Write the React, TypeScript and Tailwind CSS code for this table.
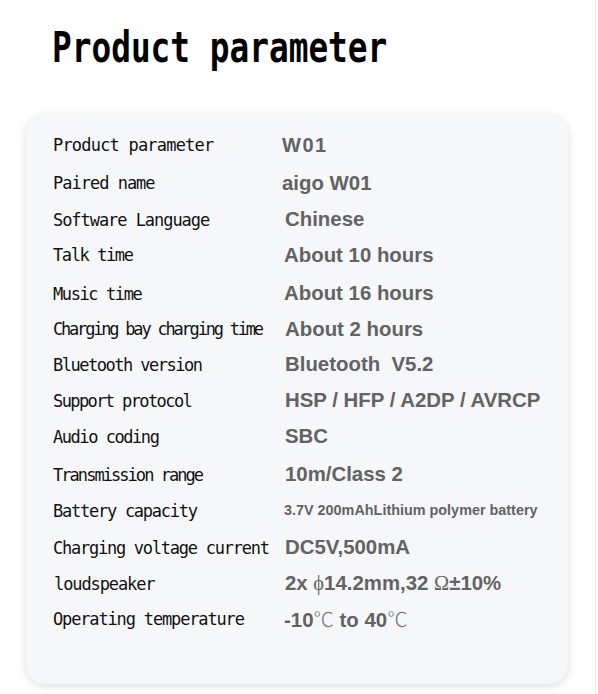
import React from "react";

type Row = {
  label: string;
  labelCls: string;
  rowCls: string;
  value: React.ReactNode;
  valueCls: string;
};

const serif = "font-['Liberation_Serif',serif] font-normal";
const cjk = "font-['Noto_Sans_CJK_SC',sans-serif] font-light text-[#7a7a7a]";

const rows: Row[] = [
  { label: "Product parameter", labelCls: "tracking-[-0.8px]", rowCls: "mt-0", value: "W01", valueCls: "text-[20px] ml-[-2px] tracking-[1.5px]" },
  { label: "Paired name", labelCls: "tracking-[-1px]", rowCls: "mt-[2px]", value: "aigo W01", valueCls: "text-[20.4px] ml-[-2px]" },
  { label: "Software Language", labelCls: "tracking-[-1.05px]", rowCls: "mt-[0.5px]", value: "Chinese", valueCls: "text-[20.4px] ml-[1px]" },
  { label: "Talk time", labelCls: "tracking-[-1.4px]", rowCls: "mt-[-0.5px]", value: "About 10 hours", valueCls: "text-[20.4px] ml-[0px]" },
  { label: "Music time", labelCls: "tracking-[-1.4px]", rowCls: "mt-[2.5px]", value: "About 16 hours", valueCls: "text-[20.4px] ml-[0px]" },
  { label: "Charging bay charging time", labelCls: "tracking-[-2.2px]", rowCls: "mt-[-0.5px]", value: "About 2 hours", valueCls: "text-[20.4px] ml-[1px]" },
  { label: "Bluetooth version", labelCls: "tracking-[-1.5px]", rowCls: "mt-[-0.5px]", value: "Bluetooth\u00a0\u00a0V5.2", valueCls: "text-[20.4px] ml-[1px]" },
  { label: "Support protocol", labelCls: "tracking-[-1.6px]", rowCls: "mt-0", value: "HSP / HFP / A2DP / AVRCP", valueCls: "text-[20.4px] ml-[1px]" },
  { label: "Audio coding", labelCls: "tracking-[-1.45px]", rowCls: "mt-0", value: "SBC", valueCls: "text-[20.4px] ml-[1px]" },
  { label: "Transmission range", labelCls: "tracking-[-1.95px]", rowCls: "mt-[2px]", value: "10m/Class 2", valueCls: "text-[20.4px] ml-[1px]" },
  { label: "Battery capacity", labelCls: "tracking-[-1.25px]", rowCls: "mt-[0.5px]", value: "3.7V 200mAhLithium polymer battery", valueCls: "text-[14.4px] ml-[0px]" },
  { label: "Charging voltage current", labelCls: "tracking-[-1.25px]", rowCls: "mt-[0.5px]", value: "DC5V,500mA", valueCls: "text-[20.4px] ml-[1px]" },
  {
    label: "loudspeaker",
    labelCls: "tracking-[-1.1px] ml-[1px]",
    rowCls: "mt-0",
    value: (
      <>
        2x <span className={serif}>{"\u03d5"}</span>14.2mm,32 <span className={serif}>{"\u03a9"}</span>±10%
      </>
    ),
    valueCls: "text-[20.4px] ml-[0px]",
  },
  {
    label: "Operating temperature",
    labelCls: "tracking-[-1.15px]",
    rowCls: "mt-[-0.5px]",
    value: (
      <>
        -10<span className={cjk}>℃</span> to 40<span className={cjk}>℃</span>
      </>
    ),
    valueCls: "text-[20.4px] ml-[0px]",
  },
];

export default function App() {
  return (
    <div className="relative w-[598px] h-[694px] bg-white overflow-hidden">
      <div className="absolute top-0 left-[595px] w-px h-full bg-[#e9e9e9]" />
      <div className="flex flex-col">
        <div className="pl-[52px] pt-[21px] h-[115px]">
          <h1 className="inline-block origin-left scale-x-[0.78] font-['DejaVu_Sans_Mono',monospace] font-bold text-[42px] leading-[54px] text-black whitespace-nowrap">
            Product parameter
          </h1>
        </div>
        <div className="ml-[26px] w-[542px] h-[569px] rounded-[20px] bg-[#f6f7f9] shadow-[0_2px_10px_rgba(0,0,0,0.14)] pt-[12px] pl-[27px] flex flex-col">
          {rows.map((r, i) => (
            <div key={i} className={`flex items-center h-9 ${r.rowCls}`}>
              <div
                className={`w-[231px] shrink-0 pt-[2px] font-['DejaVu_Sans_Mono',monospace] text-[17px] text-[#111] whitespace-nowrap ${r.labelCls}`}
              >
                {r.label}
              </div>
              <div
                className={`font-['Liberation_Sans',Arial,sans-serif] font-bold text-[#636363] whitespace-nowrap ${r.valueCls}`}
              >
                {r.value}
              </div>
            </div>
          ))}
        </div>
      </div>
    </div>
  );
}
